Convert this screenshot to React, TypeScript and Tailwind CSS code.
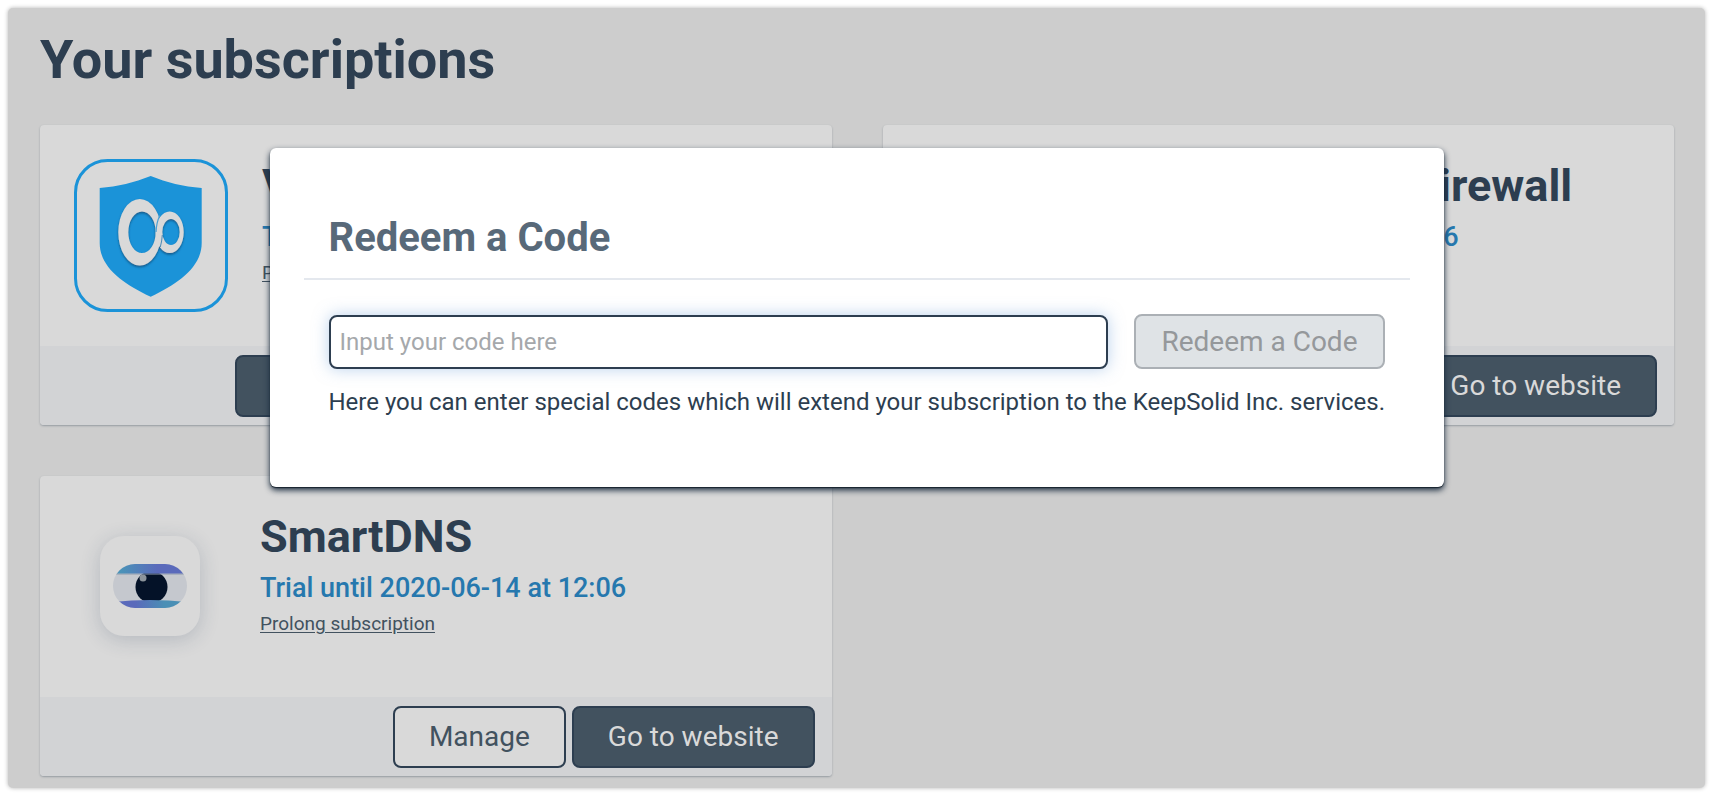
import type { ReactNode } from "react";

function ShieldLogo() {
  return (
    <svg viewBox="0 0 154 153" className="h-[153px] w-[154px]" aria-hidden="true">
      <defs>
        <filter id="ring-shadow" x="-20%" y="-20%" width="140%" height="140%">
          <feDropShadow dx="0" dy="1.5" stdDeviation="1" floodColor="#123a63" floodOpacity="0.7" />
        </filter>
      </defs>
      <rect x="1.5" y="1.5" width="151" height="150" rx="32" fill="none" stroke="#1b93d8" strokeWidth="3" />
      <path
        d="M76.7 17C93 23.500 109 27.500 127.700 29V84C127.700 108 104 125 76.700 137.700C49 125 25.700 108 25.700 84V29C44 27.500 60 23.500 76.700 17Z"
        fill="#1b93d8"
      />
      <g filter="url(#ring-shadow)" fill="#d9d9d9" fillRule="evenodd">
        <path d="M95.700 52.400a14 20.800 0 1 1 0 41.600a14 20.800 0 1 1 0 -41.600ZM97 60a8.700 13 0 1 0 0 26a8.700 13 0 1 0 0 -26Z" />
        <path d="M65.800 40a21.500 33.300 0 1 1 0 66.600a21.500 33.300 0 1 1 0 -66.600ZM68 52.400a13.700 20.800 0 1 0 0 41.600a13.700 20.800 0 1 0 0 -41.600Z" />
      </g>
      <path d="M85.800 56.500Q82.500 63 82 73" fill="none" stroke="#4a9fd2" strokeWidth="1.200" />
      <path d="M88.300 76Q88 82 86.300 88" fill="none" stroke="#4a88b4" strokeWidth="1" />
    </svg>
  );
}

function EyeLogo() {
  return (
    <div className="mx-[26px] flex size-[100px] items-center justify-center rounded-[24px] bg-[#d9d9d9] shadow-[0_4px_20px_rgba(40,60,90,0.2)]">
      <svg viewBox="0 0 74 44" className="h-[44px] w-[74px]" aria-hidden="true">
        <defs>
          <clipPath id="eye-shape">
            <rect width="74" height="44" rx="22" />
          </clipPath>
          <linearGradient id="lid-top">
            <stop offset="0.1" stopColor="#4a93b8" />
            <stop offset="0.6" stopColor="#5a6abb" />
          </linearGradient>
          <linearGradient id="lid-bottom">
            <stop offset="0.3" stopColor="#5a6abb" />
            <stop offset="0.7" stopColor="#4a8fb5" />
          </linearGradient>
        </defs>
        <g clipPath="url(#eye-shape)">
          <rect width="74" height="44" fill="#c5c8ce" />
          <circle cx="38.500" cy="23" r="16" fill="#041228" />
          <circle cx="30" cy="14" r="3.500" fill="#8c949b" />
          <rect y="9" width="74" height="2" fill="#8d99ab" opacity="0.5" />
          <rect width="74" height="9.500" fill="url(#lid-top)" />
          <path d="M0 38Q37 34 74 38V44H0Z" fill="url(#lid-bottom)" />
        </g>
      </svg>
    </div>
  );
}

function CardButton({ filled, children }: { filled?: boolean; children: ReactNode }) {
  return (
    <button
      type="button"
      className={
        filled
          ? "h-[62px] rounded-lg border-2 border-[#2d3e50] bg-[#42525f] px-[34px] text-[28px] text-[#d9d9d9]"
          : "h-[62px] rounded-lg border-2 border-[#2d3e50] bg-[#d9d9d9] px-[34px] text-[28px] text-[#42525f]"
      }
    >
      {children}
    </button>
  );
}

function Card({ logo, name, children }: { logo: ReactNode; name: string; children: ReactNode }) {
  return (
    <article className="flex h-[300px] flex-col overflow-hidden rounded-[4px] bg-[#d9d9d9] shadow-[0_1px_2px_rgba(45,62,80,0.35)]">
      <div className="flex flex-1 gap-[34px] pl-[34px] pt-[34px]">
        <div className="flex h-[152px] shrink-0 items-center">{logo}</div>
        <div>
          <h2 className="whitespace-nowrap text-[45px] font-bold leading-[54px] text-[#2d3e50]">{name}</h2>
          <p className="mt-1 text-[27px] font-medium leading-[40px] text-[#2678ae]">Trial until 2020-06-14 at 12:06</p>
          <a href="#prolong" className="mt-[2px] block text-[19px] leading-[28px] text-[#42525f] underline underline-offset-2">
            Prolong subscription
          </a>
        </div>
      </div>
      <div className="flex h-[79px] items-center justify-end gap-[6px] bg-[#d2d3d5] pr-[17px]">{children}</div>
    </article>
  );
}

export default function App() {
  return (
    <main className="bg-white p-2 font-['Roboto',sans-serif]">
      <div className="relative rounded-[5px] bg-[#cdcdcd] pb-3 pl-8 pr-[31px] shadow-[0_0_4px_rgba(0,0,0,0.3)]">
        <h1 className="pb-[33px] pt-[20px] text-[54px] font-bold leading-[64px] text-[#2d3e50]">Your subscriptions</h1>
        <section className="grid grid-cols-2 gap-[51px]">
          <Card logo={<ShieldLogo />} name="VPN Unlimited">
            <CardButton filled>Status</CardButton>
            <CardButton>Manage</CardButton>
            <CardButton filled>Go to website</CardButton>
          </Card>
          <Card logo={<div className="w-[142px]" />} name="KeepSolid DNS-Firewall">
            <CardButton>Manage</CardButton>
            <CardButton filled>Go to website</CardButton>
          </Card>
          <Card logo={<EyeLogo />} name="SmartDNS">
            <CardButton>Manage</CardButton>
            <CardButton filled>Go to website</CardButton>
          </Card>
        </section>

        <div className="absolute inset-0 flex items-start justify-center pt-[140px]">
          <form
            role="dialog"
            aria-labelledby="redeem-title"
            className="w-full max-w-[1174px] rounded-[6px] bg-white px-[34px] pb-[68px] pt-[62px] shadow-[0_1px_1px_rgba(15,25,35,0.8),0_3px_6px_rgba(20,38,58,1)]"
          >
            <h2 id="redeem-title" className="border-b-2 border-[#e4e8ee] px-[25px] pb-[12px] text-[40px] font-bold leading-[56px] text-[#586979]">
              Redeem a Code
            </h2>
            <div className="flex items-center gap-[26px] px-[25px] pt-[34px]">
              <input
                aria-label="Input your code here"
                placeholder="Input your code here"
                className="h-[54px] min-w-0 flex-1 rounded-lg border-2 border-[#2d3e50] bg-white px-[9px] text-[24px] text-[#2d3e50] shadow-[0_0_16px_rgba(120,165,220,0.5)] outline-none placeholder:text-[#a5a8ab]"
              />
              <button type="button" disabled className="h-[55px] rounded-lg border-2 border-[#abb0b5] bg-[#dfe3e6] px-[25px] text-[28px] text-[#95989b]">
                Redeem a Code
              </button>
            </div>
            <p className="pl-[25px] pt-[16px] text-[24px] leading-[34px] text-[#2d3e50]">
              Here you can enter special codes which will extend your subscription to the KeepSolid Inc. services.
            </p>
          </form>
        </div>
      </div>
    </main>
  );
}
